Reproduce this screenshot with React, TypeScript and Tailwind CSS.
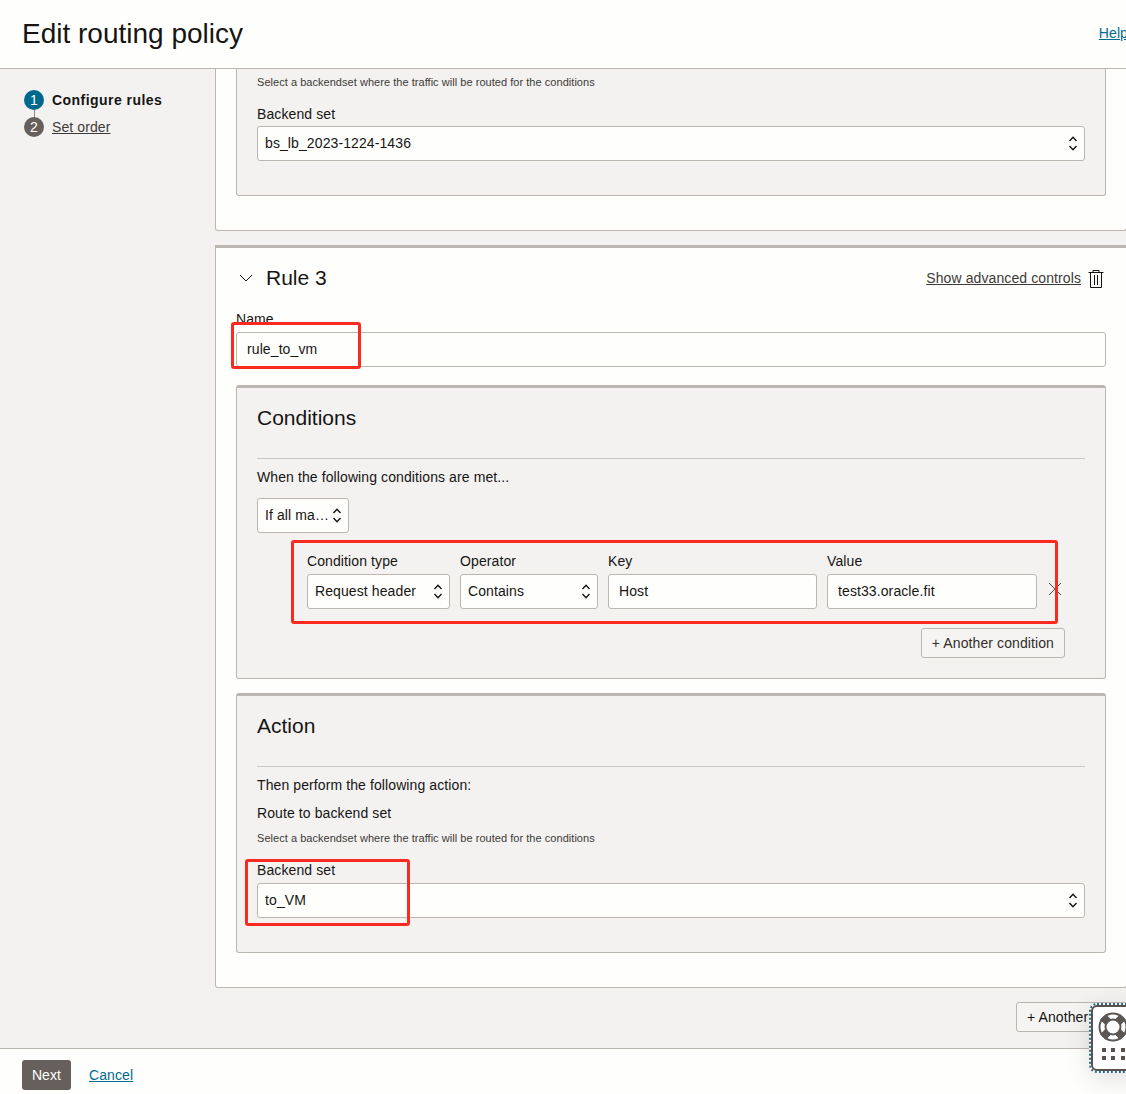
const border = "border border-[#bcb6b1]";

const UpDown = () => (
  <svg width="10" height="17" viewBox="0 0 10 17" fill="none" stroke="#161513" strokeWidth="1.4" className="shrink-0">
    <path d="M1.5 6 5 2.2 8.5 6" />
    <path d="M1.5 11 5 14.8 8.5 11" />
  </svg>
);

const Trash = () => (
  <svg width="16" height="19" viewBox="0 0 16 19" fill="none" stroke="#161513" strokeWidth="1">
    <path d="M0.5 3.5h15" />
    <path d="M5 3.5V1.5h6v2" />
    <path d="M2.5 3.5v15h11v-15" />
    <path d="M6.5 6v10M9.5 6v10" />
  </svg>
);

const Select = ({ value, className }: { value: string; className?: string }) => (
  <div className={`flex h-[35px] items-center justify-between rounded-[3px] bg-[#fefefc] pl-[7px] pr-[6px] ${border} ${className ?? ""}`}>
    <span className="truncate">{value}</span>
    <UpDown />
  </div>
);

const Input = ({ value, className }: { value: string; className?: string }) => (
  <div className={`flex h-[35px] items-center rounded-[3px] bg-[#fefefc] px-[10px] ${border} ${className ?? ""}`}>{value}</div>
);

const SmallNote = ({ className }: { className?: string }) => (
  <p className={`text-[11px] leading-[14px] tracking-[0.04px] text-[#3d3a37] ${className ?? ""}`}>
    Select a backendset where the traffic will be routed for the conditions
  </p>
);

const Panel = ({ title, children, className }: { title: string; children: React.ReactNode; className?: string }) => (
  <section className={`rounded-[3px] border border-t-[3px] border-[#bcb6b1] bg-[#f3f2f1] px-5 ${className ?? ""}`}>
    <h3 className="mt-[17px] h-[26px] text-[21px] leading-[26px] tracking-normal">{title}</h3>
    <div className="mt-[27px] border-t border-[#c9c5c1]" />
    {children}
  </section>
);

const Marker = ({ className }: { className: string }) => (
  <div className={`pointer-events-none absolute rounded-[3px] border-[3px] border-[#fb2a20] ${className}`} />
);

const Field = ({ label, children, className }: { label: string; children: React.ReactNode; className: string }) => (
  <div className={className}>
    <div className="mb-[3px] h-[19px] leading-[19px]">{label}</div>
    {children}
  </div>
);

const HelpWidget = () => (
  <div className="absolute left-[1089px] top-[1003px] h-[70px] w-[60px] rounded-[8px] border-2 border-dotted border-[#2b6b85] bg-white shadow-[0_6px_24px_rgba(0,0,0,0.12)]">
    <div className="flex h-full w-full flex-col rounded-[6px] border-2 border-[#57524f] pl-[5px] pt-[5px]">
      <svg width="30" height="30" viewBox="0 0 30 30">
        <circle cx="15" cy="15" r="13.5" fill="none" stroke="#5b5652" strokeWidth="2" />
        <path d="M5 5 10 10M25 5 20 10M5 25 10 20M25 25 20 20" stroke="#5b5652" strokeWidth="8" />
        <circle cx="15" cy="15" r="7.5" fill="#fff" stroke="#5b5652" strokeWidth="2" />
      </svg>
      <div className="mt-[6px] grid w-[27px] grid-cols-3 gap-x-[5px] gap-y-[4px] pl-[4px]">
        {[0, 1, 2, 3, 4, 5].map((i) => (
          <span key={i} className="h-[4px] w-[4px] bg-[#57524f]" />
        ))}
      </div>
    </div>
  </div>
);

export default function App() {
  return (
    <div className="relative h-[1094px] w-[1126px] overflow-hidden bg-[#f3f2f1] font-['Liberation_Sans',Arial,sans-serif] text-[14px] tracking-[0.1px] text-[#161513]">
      <div className="flex h-full w-[1152px] flex-col">
        <header className="flex h-[69px] shrink-0 items-center justify-between border-b border-[#bcb6b1] bg-[#fefefc] pl-[22px] pr-[24px]">
          <h1 className="text-[28px] leading-[34px] tracking-normal">Edit routing policy</h1>
          <a className="mb-[2px] text-[#006b8f] underline">Help</a>
        </header>

        <main className="flex min-h-0 flex-1">
          <nav className="w-[215px] shrink-0 pl-6 pt-[21px]">
            <div className="flex h-5 items-center">
              <span className="flex h-5 w-5 items-center justify-center rounded-full bg-[#00688c] text-white">1</span>
              <span className="ml-2 font-bold tracking-[0.45px]">Configure rules</span>
            </div>
            <div className="ml-[9.5px] h-[7px] w-px bg-[#8f8a86]" />
            <div className="flex h-5 items-center">
              <span className="flex h-5 w-5 items-center justify-center rounded-full bg-[#665f5b] text-white">2</span>
              <a className="ml-2 text-[#3d3a37] underline">Set order</a>
            </div>
          </nav>

          <div className="w-[912px] shrink-0">
            <div className="h-[162px] rounded-b-[3px] border border-t-0 border-[#bcb6b1] bg-[#fefefc] pl-5 pr-5">
              <div className="h-[127px] rounded-b-[3px] border border-t-0 border-[#bcb6b1] bg-[#f3f2f1] px-5">
                <SmallNote className="pt-[6px]" />
                <div className="mt-[16px] h-[19px] leading-[19px]">Backend set</div>
                <Select value="bs_lb_2023-1224-1436" className="mt-[2px]" />
              </div>
            </div>

            <article className="mt-[14px] h-[743px] rounded-b-[3px] border border-t-[3px] border-[#bcb6b1] bg-[#fefefc] px-5">
              <div className="flex h-[60px] items-center justify-between">
                <div className="flex items-center">
                  <svg width="14" height="8" viewBox="0 0 14 8" fill="none" stroke="#161513" strokeWidth="1" className="ml-[3px]">
                    <path d="M1 1l6 6 6-6" />
                  </svg>
                  <h2 className="ml-[13px] text-[21px] tracking-normal">Rule 3</h2>
                </div>
                <div className="flex items-center">
                  <a className="text-[#3d3a37] underline">Show advanced controls</a>
                  <span className="ml-[7px] mr-[2px] mt-[1px]">
                    <Trash />
                  </span>
                </div>
              </div>
              <div className="mt-[1px] h-[23px] leading-[20px]">Name</div>
              <Input value="rule_to_vm" />

              <Panel title="Conditions" className="mt-[18px] h-[294px]">
                <div className="mt-[9px] h-[19px] leading-[19px]">When the following conditions are met...</div>
                <Select value="If all ma…" className="mt-[11px] w-[92px]" />
                <div className="mt-[19px] ml-[50px] flex items-start gap-[10px]">
                  <Field label="Condition type" className="w-[143px]">
                    <Select value="Request header" />
                  </Field>
                  <Field label="Operator" className="w-[138px]">
                    <Select value="Contains" />
                  </Field>
                  <Field label="Key" className="w-[209px]">
                    <Input value="Host" />
                  </Field>
                  <Field label="Value" className="w-[210px]">
                    <Input value="test33.oracle.fit" />
                  </Field>
                  <svg width="14" height="14" viewBox="0 0 14 14" stroke="#4f4a46" strokeWidth="1" className="ml-px mt-[30px] shrink-0">
                    <path d="M1 1l12 12M13 1 1 13" />
                  </svg>
                </div>
                <div className="mt-[19px] flex justify-end pr-[20px]">
                  <button className={`h-[30px] rounded-[3px] bg-[#f5f4f2] px-[10px] text-[#312d2a] ${border}`}>+ Another condition</button>
                </div>
              </Panel>

              <Panel title="Action" className="mt-[14px] h-[260px]">
                <div className="mt-[9px] h-[19px] leading-[19px]">Then perform the following action:</div>
                <div className="mt-[9px] h-[19px] leading-[19px]">Route to backend set</div>
                <SmallNote className="mt-[8px]" />
                <div className="mt-[16px] h-[19px] leading-[19px]">Backend set</div>
                <Select value="to_VM" className="mt-[3px]" />
              </Panel>
            </article>

            <div className="mt-[14px] flex justify-end">
              <button className={`h-[30px] rounded-[3px] bg-[#f5f4f2] px-[10px] ${border}`}>+ Another rule</button>
            </div>
          </div>
        </main>

        <footer className="flex h-[46px] shrink-0 items-center border-t border-[#bcb6b1] bg-[#fefefc] pl-[22px] pt-[6px]">
          <button className="h-[30px] w-[49px] rounded-[3px] bg-[#665f5b] pt-px text-white">Next</button>
          <a className="ml-[18px] mt-px text-[#006b8f] underline">Cancel</a>
        </footer>
      </div>

      <Marker className="left-[231px] top-[322px] h-[47px] w-[130px]" />
      <Marker className="left-[291px] top-[540px] h-[84px] w-[767px]" />
      <Marker className="left-[245px] top-[859px] h-[67px] w-[165px]" />
      <HelpWidget />
    </div>
  );
}
